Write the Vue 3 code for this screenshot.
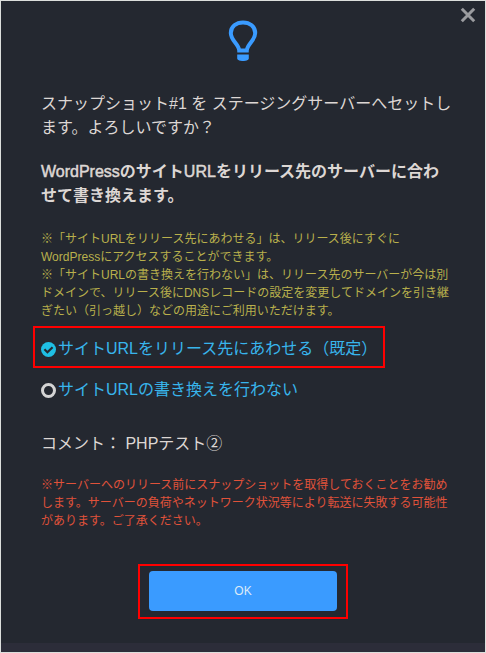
<script setup>
import { ref } from 'vue';

const urlMode = ref('rewrite');

const options = [
  { value: 'rewrite', label: 'サイトURLをリリース先にあわせる（既定）', marked: true },
  { value: 'keep', label: 'サイトURLの書き換えを行わない', marked: false },
];
</script>

<template>
  <div class="modal" role="dialog" aria-labelledby="modal-message">
    <button class="modal-close" type="button" aria-label="閉じる">
      <svg viewBox="0 0 16 16" width="16" height="16">
        <path d="M1.8 1.8L14.2 14.2M14.2 1.8L1.8 14.2" />
      </svg>
    </button>

    <div class="modal-body">
      <!-- Light bulb -->
      <svg class="bulb" viewBox="0 0 30 42" width="30" height="42">
        <path
          class="bulb-glass"
          d="M11.2 30.4C10.9 24.2 2.8 20.6 2.8 12.9C2.8 6.6 8.2 2.4 15 2.4S27.2 6.6 27.2 12.9C27.2 20.6 19.1 24.2 18.8 30.4Z"
        />
        <path class="bulb-base" d="M9.2 34.5H20.8V38.2C20.8 40 18 41 15 41S9.2 40 9.2 38.2Z" />
      </svg>

      <p id="modal-message" class="message">
        スナップショット#1 を ステージングサーバーへセットし<br />ます。よろしいですか？
      </p>

      <p class="message message-strong">
        <span class="latin">WordPress</span>のサイト<span class="latin">URL</span>をリリース先のサーバーに合わ<br />せて書き換えます。
      </p>

      <p class="note">
        ※「サイトURLをリリース先にあわせる」は、リリース後にすぐに<br />WordPressにアクセスすることができます。<br />※「サイトURLの書き換えを行わない」は、リリース先のサーバーが今は別<br />ドメインで、リリース後にDNSレコードの設定を変更してドメインを引き継<br />ぎたい（引っ越し）などの用途にご利用いただけます。
      </p>

      <div class="options" role="radiogroup">
        <label
          v-for="option in options"
          :key="option.value"
          :class="['option', { 'option-marked': option.marked }]"
        >
          <span class="radio">
            <input v-model="urlMode" type="radio" name="url-mode" :value="option.value" />
            <svg v-if="urlMode === option.value" viewBox="0 0 14 14" width="15" height="15">
              <path d="M3.2 6.8L6 9.6L10.8 4.8" />
            </svg>
          </span>
          <span>{{ option.label }}</span>
        </label>
      </div>

      <p class="message">コメント： PHPテスト②</p>

      <p class="note note-warning">
        ※サーバーへのリリース前にスナップショットを取得しておくことをお勧め<br />します。サーバーの負荷やネットワーク状況等により転送に失敗する可能性<br />があります。ご了承ください。
      </p>

      <div class="actions">
        <button class="ok-button" type="button">OK</button>
      </div>
    </div>

    <div class="modal-footer"></div>
  </div>
</template>

<style>
body {
  background-color: #dcdfdc;
}
</style>

<style scoped>
.modal {
  position: relative;
  margin: 1px;
  background-color: #242830;
  color: #ddd7d4;
  font-family: 'Liberation Sans', 'Noto Sans CJK JP', sans-serif;
  font-size: 16px;
  line-height: 24px;
}

.modal-close {
  position: absolute;
  top: 6px;
  right: 9px;
  display: flex;
  padding: 0;
  border: 0;
  background: none;
  cursor: pointer;
}

.modal-close path {
  stroke: #9b9c9f;
  stroke-width: 3;
}

.modal-body {
  display: flex;
  flex-direction: column;
  padding: 19px 32px 24px;
}

.bulb {
  align-self: center;
  margin-bottom: 30px;
}

.bulb-glass {
  fill: none;
  stroke: #3a9bff;
  stroke-width: 4;
}

.bulb-base {
  fill: #3a9bff;
}

.message {
  margin: 0 0 20px;
  padding: 0 8px;
  white-space: nowrap;
}

.message-strong {
  margin-bottom: 22px;
  font-weight: bold;
}

.message-strong .latin {
  font-weight: normal;
  -webkit-text-stroke: 0.5px;
}

.note {
  margin: 0 0 6px;
  padding: 0 8px;
  color: #b9b04c;
  font-size: 12px;
  line-height: 18px;
  white-space: nowrap;
}

.options {
  display: flex;
  flex-direction: column;
  align-items: flex-start;
  margin-bottom: 30px;
}

.option {
  display: flex;
  align-items: center;
  gap: 2px;
  padding: 10px 8px 0;
  color: #38b5ec;
  white-space: nowrap;
}

.option-marked {
  padding: 9px 6px 5px;
  border: 2px solid #f00;
}

.radio {
  position: relative;
  display: flex;
}

.radio input {
  appearance: none;
  width: 15px;
  height: 15px;
  margin: 0;
  border: 3px solid #d4d4d4;
  border-radius: 50%;
}

.radio input:checked {
  border: 0;
  background-color: #1fbfe4;
}

.radio svg {
  position: absolute;
  inset: 0;
  pointer-events: none;
}

.radio path {
  fill: none;
  stroke: #242830;
  stroke-width: 2;
}

.note-warning {
  margin-bottom: 34px;
  color: #e0523a;
}

.actions {
  display: flex;
  align-self: center;
  width: 50%;
  padding: 5px 9px 6px;
  box-sizing: border-box;
  border: 2px solid #f00;
}

.ok-button {
  flex: 1;
  height: 40px;
  border: 0;
  border-radius: 4px;
  background-color: #3a9bff;
  color: #dceaf8;
  font-family: inherit;
  font-size: 12px;
  cursor: pointer;
}

.modal-footer {
  height: 9px;
  background-color: #2c2d39;
}
</style>
